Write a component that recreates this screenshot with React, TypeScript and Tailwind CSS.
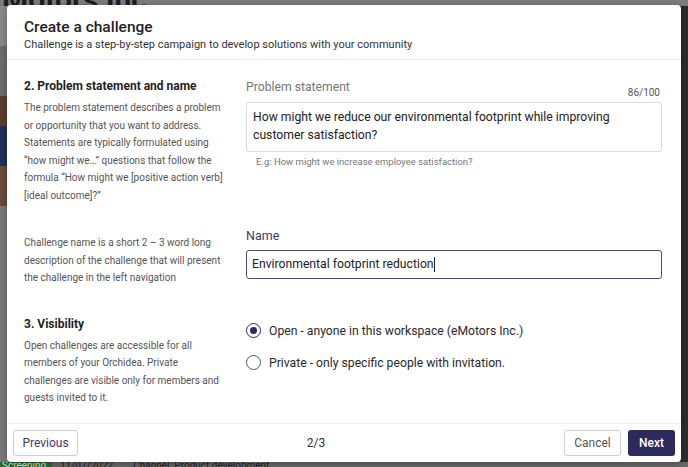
import React from "react";

const font = { fontFamily: "Roboto, 'Noto Sans', sans-serif" };

function Radio({ checked, label }: { checked: boolean; label: string }) {
  return (
    <div className="flex items-center gap-[8px]">
      <span
        className={
          checked
            ? "w-[15px] h-[15px] rounded-full border-[1.5px] border-[#2d2a5e] flex items-center justify-center"
            : "w-[15px] h-[15px] rounded-full border-[1.5px] border-[#555]"
        }
      >
        {checked && <span className="w-[7px] h-[7px] rounded-full bg-[#2d2a5e]" />}
      </span>
      <span className="text-[12.2px] leading-[18px] text-[#2a2a2a]">{label}</span>
    </div>
  );
}

export default function App() {
  return (
    <div className="relative w-[688px] h-[467px] overflow-hidden bg-[#5c5c5c]" style={font}>
      {/* background page (dimmed) */}
      <div className="flex flex-col h-full">
        <div className="h-[6px] bg-[#7d7d7d] overflow-hidden flex items-end pl-[2px]">
          <span className="text-[30px] font-bold text-[#1e1e1e] leading-[12px]">Motors Inc</span>
        </div>
        <div className="flex-1 flex">
          <div className="w-[8px] flex flex-col">
            <div className="h-[40px] bg-[#8a8a8a]" />
            <div className="h-[50px] bg-[#6e6e6e]" />
            <div className="h-[30px] bg-[#5a3e2e]" />
            <div className="h-[40px] bg-[#22305a]" />
            <div className="h-[40px] bg-[#6a4a3a]" />
            <div className="flex-1 bg-[#7a7a7a]" />
          </div>
          <div className="flex-1" />
          <div className="w-[8px] bg-[#2c2c2c]" />
        </div>
        <div className="h-[5px] overflow-hidden flex items-start bg-[#6a6a6a] text-[10px] text-[#222] leading-[8px]">
          <span className="bg-[#2e6a2e] text-[#d0e8d0] px-[2px] w-[52px]">Screening</span>
          <span className="ml-[8px]">11/07/2022</span>
          <span className="ml-[20px]">Channel: Product development</span>
        </div>
      </div>

      {/* modal */}
      <div className="absolute left-[7px] top-[5px] w-[674px] h-[457px] bg-white rounded-[4px] flex flex-col shadow-[0_2px_8px_rgba(0,0,0,0.3)]">
        <div className="h-[55px] border-b border-[#ececec] pl-[17px] pt-[12px]">
          <div className="text-[15.5px] leading-[20px] font-medium text-[#1f1f1f]">Create a challenge</div>
          <div className="text-[11px] leading-[15px] text-[#333]">
            Challenge is a step-by-step campaign to develop solutions with your community
          </div>
        </div>

        <div className="flex-1 grid grid-cols-[201px_416px] gap-x-[21px] pl-[17px] content-start">
          {/* Row A */}
          <div className="pt-[17px]">
            <div className="text-[12px] leading-[18px] font-bold text-[#1f1f1f]">
              2. Problem statement and name
            </div>
            <p className="mt-[4px] text-[10px] leading-[17.5px] text-[#555]">
              The problem statement describes a problem or opportunity that you want to address.
              Statements are typically formulated using “how might we…” questions that follow the
              formula “How might we [positive action verb] [ideal outcome]?”
            </p>
          </div>
          <div className="pt-[18px]">
            <div className="flex justify-between h-[24px]">
              <span className="text-[12.2px] leading-[18px] text-[#777]">Problem statement</span>
              <span className="self-end text-[10px] leading-[12px] text-[#555] mb-[3px] pr-[2px]">86/100</span>
            </div>
            <div className="h-[50px] border border-[#dcdcdc] rounded-[3px] px-[6px] pt-[5px] text-[12.2px] leading-[18px] text-[#222]">
              How might we reduce our environmental footprint while improving customer satisfaction?
            </div>
            <div className="mt-[4px] pl-[10px] text-[9.5px] leading-[12px] text-[#777]">
              E.g: How might we increase employee satisfaction?
            </div>
          </div>

          {/* Row B */}
          <div className="mt-[22px] pt-[8px]">
            <p className="text-[10px] leading-[17.5px] text-[#555]">
              Challenge name is a short 2 – 3 word long description of the challenge that will present
              the challenge in the left navigation
            </p>
          </div>
          <div className="mt-[22px]">
            <div className="text-[12.5px] leading-[18px] text-[#3d3a5c] pt-[1px]">Name</div>
            <div className="mt-[5px] h-[29px] border-[1.5px] border-[#4d4a72] rounded-[3px] px-[5px] flex items-center text-[12.2px] text-[#222]">
              Environmental footprint reduction
              <span className="w-px h-[15px] bg-[#222]" />
            </div>
          </div>

          {/* Row C */}
          <div className="mt-[28px]">
            <div className="text-[12px] leading-[18px] font-bold text-[#1f1f1f]">3. Visibility</div>
            <p className="mt-[4px] text-[10px] leading-[17.5px] text-[#555]">
              Open challenges are accessible for all members of your Orchidea. Private challenges are
              visible only for members and guests invited to it.
            </p>
          </div>
          <div className="mt-[35px] flex flex-col gap-[14px]">
            <Radio checked label="Open - anyone in this workspace (eMotors Inc.)" />
            <Radio checked={false} label="Private - only specific people with invitation." />
          </div>
        </div>

        <div className="h-[39px] border-t border-[#ececec] px-[6px] flex items-center justify-between">
          <button className="h-[26px] w-[65px] border border-[#cfcfcf] rounded-[3px] text-[12px] text-[#3d3a6a] bg-white">
            Previous
          </button>
          <span className="text-[12px] text-[#333] mr-[10px]">2/3</span>
          <div className="flex gap-[7px]">
            <button className="h-[26px] w-[57px] border border-[#cfcfcf] rounded-[3px] text-[12px] text-[#555] bg-white">
              Cancel
            </button>
            <button className="h-[26px] w-[47px] rounded-[3px] text-[12px] font-medium text-white bg-[#2d2a5e]">
              Next
            </button>
          </div>
        </div>
      </div>
    </div>
  );
}
